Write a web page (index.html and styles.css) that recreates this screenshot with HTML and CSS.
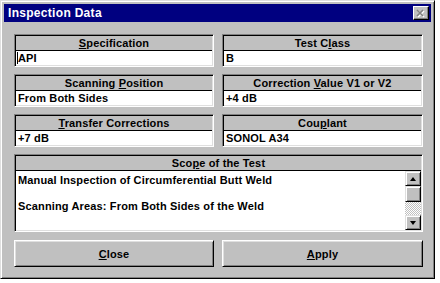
FILE: index.html
```html
<!DOCTYPE html>
<html lang="en">
<head>
  <meta charset="UTF-8">
  <title>Inspection Data</title>
  <link rel="stylesheet" href="styles.css">
</head>
<body>
  <div class="window">
    <div class="titlebar">
      <span class="title">Inspection Data</span>
      <span class="close-btn">
        <svg width="10" height="9" viewBox="0 0 10 9">
          <path d="M2 2 L8 8 M8 2 L2 8" stroke="#fff" stroke-width="1.6"/>
          <path d="M1 1 L7 7 M7 1 L1 7" stroke="#808080" stroke-width="1.6"/>
        </svg>
      </span>
    </div>

    <div class="content">
      <div class="fields">
        <div class="field">
          <div class="field-head"><u>S</u>pecification</div>
          <div class="field-value"><span class="caret"></span>API</div>
        </div>
        <div class="field">
          <div class="field-head">Test C<u>l</u>ass</div>
          <div class="field-value">B</div>
        </div>
        <div class="field">
          <div class="field-head">Scanning <u>P</u>osition</div>
          <div class="field-value">From Both Sides</div>
        </div>
        <div class="field">
          <div class="field-head">Correction <u>V</u>alue V1 or V2</div>
          <div class="field-value">+4 dB</div>
        </div>
        <div class="field">
          <div class="field-head"><u>T</u>ransfer Corrections</div>
          <div class="field-value">+7 dB</div>
        </div>
        <div class="field">
          <div class="field-head">Cou<u>p</u>lant</div>
          <div class="field-value">SONOL A34</div>
        </div>
        <div class="field wide">
          <div class="field-head">Sco<u>p</u>e of the Test</div>
          <div class="memo">
            <div class="memo-text">
              Manual Inspection of Circumferential Butt Weld<br><br>
              Scanning Areas: From Both Sides of the Weld
            </div>
            <div class="scrollbar">
              <div class="sb-btn"><span class="arrow-up"></span></div>
              <div class="sb-thumb"></div>
              <div class="sb-track"></div>
              <div class="sb-btn"><span class="arrow-down"></span></div>
            </div>
          </div>
        </div>
      </div>

      <div class="buttons">
        <button class="btn"><u>C</u>lose</button>
        <button class="btn"><u>A</u>pply</button>
      </div>
    </div>
  </div>
</body>
</html>
```

FILE: styles.css
```css
body {
  margin: 0;
  background: #fff;
  font-family: "Liberation Sans", Arial, sans-serif;
  font-size: 11px;
  font-weight: bold;
  letter-spacing: 0.15px;
  color: #000;
}

.window {
  width: 435px;
  height: 279px;
  box-sizing: border-box;
  background: #c0c0c0;
  border: 1px solid;
  border-color: #dfdfdf #000 #000 #dfdfdf;
  box-shadow: inset 1px 1px #fff, inset -1px -1px #808080;
  padding: 3px;
}

.titlebar {
  height: 18px;
  background: #000080;
  color: #fff;
  display: flex;
  align-items: center;
  justify-content: space-between;
  padding: 0 2px 0 4px;
}

.title {
  font-size: 12px;
  letter-spacing: 0.3px;
}

.close-btn {
  width: 16px;
  height: 14px;
  box-sizing: border-box;
  background: #c0c0c0;
  border: 1px solid;
  border-color: #fff #000 #000 #fff;
  box-shadow: inset -1px -1px #808080;
  display: flex;
  align-items: center;
  justify-content: center;
}

.content {
  padding: 12px 8px 0 10px;
}

.fields {
  display: grid;
  grid-template-columns: 200px 201px;
  column-gap: 8px;
  row-gap: 7px;
}

.field {
  border: 1px solid;
  border-color: #808080 #fff #fff #808080;
  box-shadow: inset 1px 1px #000, inset -1px -1px #dfdfdf;
  padding: 1px;
  display: flex;
  flex-direction: column;
}

.field.wide {
  grid-column: 1 / 3;
}

.field-head {
  height: 14px;
  line-height: 14px;
  text-align: center;
  background: #c0c0c0;
  border-bottom: 1px solid #000;
}

.field-value {
  height: 14px;
  line-height: 14px;
  background: #fff;
  padding-left: 2px;
  white-space: nowrap;
}

.caret {
  display: inline-block;
  width: 1px;
  height: 12px;
  background: #000;
  vertical-align: -2px;
  margin-left: -1px;
  margin-right: 0;
}

.memo {
  height: 59px;
  background: #fff;
  display: flex;
}

.memo-text {
  flex: 1;
  padding: 3px 0 0 2px;
  line-height: 13px;
}

.scrollbar {
  width: 16px;
  display: flex;
  flex-direction: column;
}

.sb-btn,
.sb-thumb {
  height: 16px;
  box-sizing: border-box;
  background: #c0c0c0;
  border: 1px solid;
  border-color: #dfdfdf #000 #000 #dfdfdf;
  box-shadow: inset 1px 1px #fff, inset -1px -1px #808080;
  display: flex;
  align-items: center;
  justify-content: center;
}

.sb-btn {
  height: 15px;
}

.sb-track {
  flex: 1;
  background-color: #fff;
  background-image: repeating-conic-gradient(#c0c0c0 0 25%, #fff 0 50%);
  background-size: 2px 2px;
}

.arrow-up,
.arrow-down {
  width: 0;
  height: 0;
  border-left: 3.5px solid transparent;
  border-right: 3.5px solid transparent;
}

.arrow-up {
  border-bottom: 4px solid #000;
}

.arrow-down {
  border-top: 4px solid #000;
}

.buttons {
  display: grid;
  grid-template-columns: 200px 201px;
  column-gap: 8px;
  margin-top: 8px;
}

.btn {
  height: 27px;
  font: inherit;
  letter-spacing: inherit;
  background: #c0c0c0;
  border: 1px solid;
  border-color: #fff #000 #000 #fff;
  box-shadow: inset 1px 1px #dfdfdf, inset -1px -1px #808080;
  padding: 0;
  color: #000;
}
```
